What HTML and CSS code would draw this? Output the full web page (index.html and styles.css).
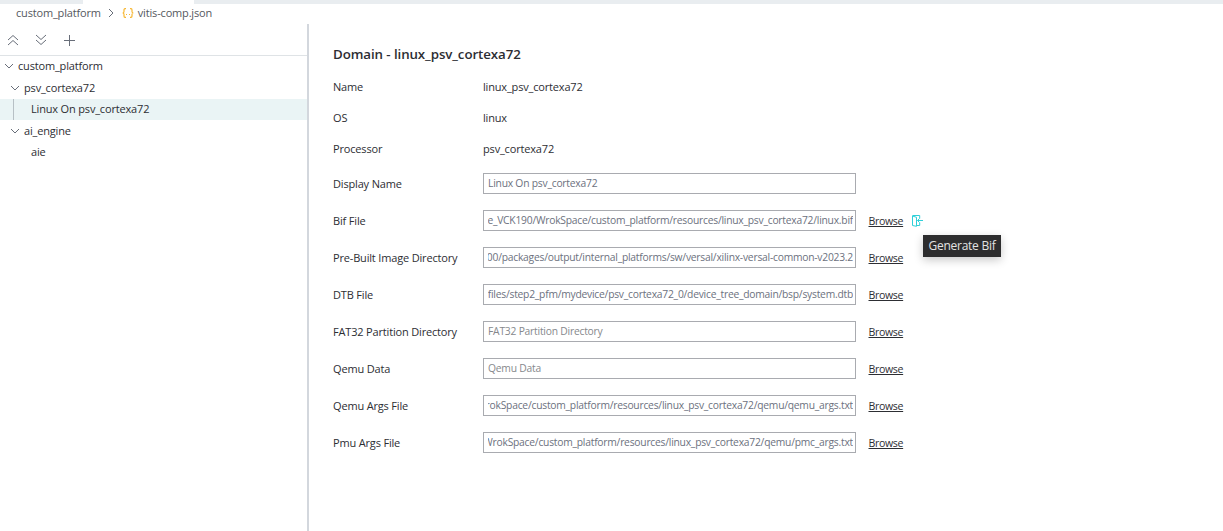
FILE: index.html
```html
<!DOCTYPE html>
<html lang="en">
<head>
<meta charset="utf-8">
<title>vitis-comp.json</title>
<link rel="stylesheet" href="styles.css">
</head>
<body>
<div class="tabs"><div class="tab-active"></div></div>
<nav class="breadcrumb">
  <span class="crumb-root">custom_platform</span>
  <svg class="crumb-sep" width="6" height="10" viewBox="0 0 6 10"><path d="M1 1l4 4-4 4"/></svg>
  <svg class="json-icon" width="12" height="10" viewBox="0 0 12 10"><path d="M4 .7H3Q2 .7 2 2v1.500Q2 5 .6 5 2 5 2 6.500V8q0 1.300 1 1.300h1M8 .7h1q1 0 1 1.300v1.500Q10 5 11.400 5 10 5 10 6.500V8q0 1.300-1 1.300H8"/><path d="M4 6.500h1M7 6.500h1"/></svg>
  <span class="crumb-file">vitis-comp.json</span>
</nav>
<div class="workspace">
  <aside class="sidebar">
    <div class="toolbar">
      <svg width="12" height="12" viewBox="0 0 12 12"><path d="M1 6l5-4.500L11 6M1 11l5-4.500 5 4.500"/></svg>
      <svg width="12" height="12" viewBox="0 0 12 12"><path d="M1 1l5 4.500L11 1M1 6l5 4.500L11 6"/></svg>
      <svg width="12" height="12" viewBox="0 0 12 12"><path d="M6.500 1v11M1 6.500h11"/></svg>
    </div>
    <ul class="tree">
      <li class="node level-0"><svg width="10" height="6" viewBox="0 0 10 6"><path d="M1 1l4 4 4-4"/></svg><span>custom_platform</span></li>
      <li class="node level-1"><svg width="10" height="6" viewBox="0 0 10 6"><path d="M1 1l4 4 4-4"/></svg><span>psv_cortexa72</span></li>
      <li class="node level-2 selected"><span>Linux On psv_cortexa72</span></li>
      <li class="node level-1"><svg width="10" height="6" viewBox="0 0 10 6"><path d="M1 1l4 4 4-4"/></svg><span>ai_engine</span></li>
      <li class="node level-2"><span>aie</span></li>
    </ul>
  </aside>
  <main class="editor">
    <h1>Domain - linux_psv_cortexa72</h1>
    <div class="info"><span>Name</span><span>linux_psv_cortexa72</span></div>
    <div class="info"><span>OS</span><span>linux</span></div>
    <div class="info"><span>Processor</span><span>psv_cortexa72</span></div>
    <div class="fields">
      <div class="field"><label>Display Name</label><div class="input"><div class="value"><span>Linux On psv_cortexa72</span></div></div></div>
      <div class="field"><label>Bif File</label><div class="input"><div class="value end"><span>e_VCK190/WrokSpace/custom_platform/resources/linux_psv_cortexa72/linux.bif</span></div></div><a>Browse</a>
        <span class="generate">
          <svg width="11" height="12" viewBox="0 0 11 12"><path d="M.5 1l4 1.300v9L.5 10.500zM.5.5h7.200v3M7.700 7.500v3H4.500M5.500 5.500H11M7.500 3.500l-2 2 2 2"/></svg>
          <span class="tooltip">Generate Bif</span>
        </span>
      </div>
      <div class="field"><label>Pre-Built Image Directory</label><div class="input"><div class="value end"><span>00/packages/output/internal_platforms/sw/versal/xilinx-versal-common-v2023.2</span></div></div><a>Browse</a></div>
      <div class="field"><label>DTB File</label><div class="input"><div class="value end"><span>files/step2_pfm/mydevice/psv_cortexa72_0/device_tree_domain/bsp/system.dtb</span></div></div><a>Browse</a></div>
      <div class="field"><label>FAT32 Partition Directory</label><div class="input"><div class="value placeholder"><span>FAT32 Partition Directory</span></div></div><a>Browse</a></div>
      <div class="field"><label>Qemu Data</label><div class="input"><div class="value placeholder"><span>Qemu Data</span></div></div><a>Browse</a></div>
      <div class="field"><label>Qemu Args File</label><div class="input"><div class="value end"><span>rokSpace/custom_platform/resources/linux_psv_cortexa72/qemu/qemu_args.txt</span></div></div><a>Browse</a></div>
      <div class="field"><label>Pmu Args File</label><div class="input"><div class="value end"><span>WrokSpace/custom_platform/resources/linux_psv_cortexa72/qemu/pmc_args.txt</span></div></div><a>Browse</a></div>
    </div>
  </main>
</div>
</body>
</html>
```
FILE: styles.css
```css
* { box-sizing: border-box; }
body {
  margin: 0;
  height: 531px;
  display: flex;
  flex-direction: column;
  overflow: hidden;
  background: #fff;
  color: #2d2e33;
  font: 11px/20px "Open Sans", "Noto Sans", sans-serif;
  letter-spacing: -0.17px;
  white-space: nowrap;
}
svg { fill: none; stroke: #686e79; flex: none; }
.tabs { height: 4px; flex: none; background: #e9edf0; padding-left: 83px; }
.tab-active { width: 111px; height: 4px; background: #fff; }
.breadcrumb {
  height: 20px;
  flex: none;
  display: flex;
  align-items: center;
  padding: 0 0 2px 16px;
  color: #55585e;
}
.crumb-sep { margin: 0 8px 0 7px; }
.json-icon { stroke: #f7b733; stroke-width: 1.2; margin-right: 4px; }
.workspace { flex: 1; display: flex; }
.sidebar { width: 309px; flex: none; border-right: 2px solid #d3d7dd; }
.toolbar {
  height: 32px;
  display: flex;
  align-items: center;
  gap: 16px;
  padding-left: 7px;
  border-bottom: 1px solid #dfe3e6;
}
.tree { list-style: none; margin: 0; padding: 0; }
.node { height: 21.4px; display: flex; align-items: center; }
.node svg { margin-right: 4px; }
.level-0 { padding: 0 0 1px 4px; }
.level-1 { padding-left: 10px; }
.level-2 { padding-left: 31px; }
.selected {
  background: linear-gradient(#b7c0c5, #b7c0c5) 13px 0 / 1px 100% no-repeat #eaf4f5;
}
.editor { padding: 19px 0 0 24px; }
h1 { margin: 0 0 8px; font-size: 13.3px; line-height: 22px; font-weight: 600; letter-spacing: -0.08px; color: #2c2d33; }
.info { height: 31.2px; display: grid; grid-template-columns: 150px auto; align-items: center; line-height: 28px; padding-bottom: 3px; }
.fields { margin-top: -1.6px; }
.field {
  height: 37px;
  display: grid;
  grid-template-columns: 150px 373px 35px auto;
  align-items: center;
}
.field label { padding-top: 1px; }
.input { height: 21px; border: 1px solid #a9abb0; padding: 0 2px 0 4px; }
.value { overflow: hidden; display: flex; font-size: 10.3px; line-height: 18px; letter-spacing: -0.22px; color: #6c717e; }
.end { justify-content: flex-end; letter-spacing: -0.235px; }
.placeholder { color: #86888c; }
.field a { text-decoration: underline; font-size: 10.6px; letter-spacing: -0.35px; margin-left: 12.5px; padding-top: 1px; }
.generate { position: relative; display: flex; margin-left: 20.5px; padding-top: 2px; }
.generate svg { stroke: #2fd0d8; }
.tooltip {
  position: absolute;
  left: 11.5px;
  top: 22px;
  width: 78px;
  height: 22px;
  line-height: 21px;
  font-size: 12px;
  letter-spacing: -0.25px;
  text-align: center;
  background: #2d2d2e;
  color: #e2e2e2;
  box-shadow: 0 3px 10px rgba(0, 0, 0, .22);
}
```
